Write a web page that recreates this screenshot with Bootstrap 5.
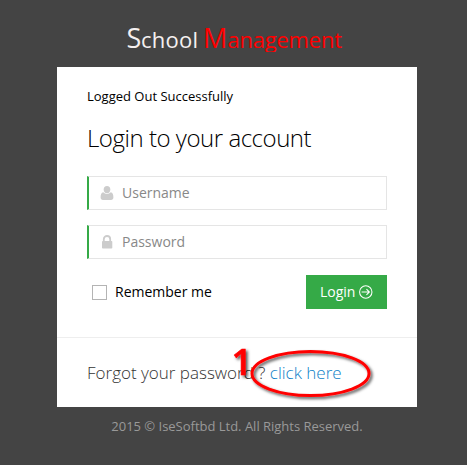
<!DOCTYPE html>
<html lang="en">
<head>
<meta charset="utf-8">
<meta name="viewport" content="width=device-width, initial-scale=1">
<title>School Management - Login</title>
<link href="https://cdn.jsdelivr.net/npm/bootstrap@5.3.0/dist/css/bootstrap.min.css" rel="stylesheet">
<style>
body{background:#444;font-family:"Open Sans",sans-serif;font-size:13px;line-height:20px;color:#000;overflow:hidden}
.login-page{padding-left:7px}
.brand-logo{height:67px;display:block;width:360px}
.login-box{width:360px;height:340px;background:#fff}
.login-main{height:270px;padding:19px 30px 0}
.login-title{font-size:24px;font-weight:300;line-height:30px;margin:17px 0 23px;white-space:nowrap;letter-spacing:-.46px}
.field{height:34px;border:1px solid #e5e5e5;border-left:2px solid #35aa47;margin-bottom:15px}
.field svg{width:14px;height:14px;margin-left:11px;flex:none}
.field input{font-size:14px;padding:0 0 2px 8px;color:#555;height:32px}
.field input::placeholder{color:#888;opacity:1}
.field input:focus{box-shadow:none}
.actions{margin-top:16px}
.remember{font-size:14px;margin-left:5px;gap:8px}
.remember .form-check-input{width:15px;height:15px;border:1px solid #b4b4b4;border-radius:0;margin:0}
.btn-login{background:#35aa47;color:#fff;font-size:14px;line-height:20px;padding:7px 14px;height:34px;width:81px;gap:4px}
.btn-login:hover{background:#1d943b;color:#fff}
.forgot{height:70px;border-top:1px solid #eee;padding:25px 30px 0;font-size:17px;font-weight:300;line-height:20px;color:#333;white-space:nowrap}
.forgot a{color:#0d7fc8}
.marker{position:absolute;left:170px;top:-1px;width:155px;height:70px;pointer-events:none;overflow:visible}
.legal{color:#999;font-size:13px;line-height:18px;padding-top:10px;letter-spacing:-.01px}
</style>
</head>
<body>
<main class="login-page d-flex flex-column align-items-center">
  <svg class="brand-logo" viewBox="57 0 360 67" role="img" aria-label="School Management" font-family="Open Sans, sans-serif">
    <defs><clipPath id="logoClip"><rect x="57" y="0" width="360" height="52"/></clipPath></defs>
    <g clip-path="url(#logoClip)">
      <text x="126.500" y="48" fill="#f5f0f0" font-size="27">S</text>
      <text x="141" y="48" fill="#f5f0f0" font-size="22" textLength="57">chool</text>
      <text x="203" y="48" fill="#f00" font-size="27">M</text>
      <text x="227.500" y="48" fill="#f00" font-size="22" textLength="114.500">anagement</text>
    </g>
  </svg>
  <section class="login-box">
    <form class="login-main">
      <div>Logged Out Successfully</div>
      <h3 class="login-title">Login to your account</h3>
      <div class="field d-flex align-items-center">
        <svg viewBox="0 0 14 14" fill="#ccc"><ellipse cx="7" cy="3.600" rx="3.300" ry="3.600"/><path d="M3.300 6.300C1.200 6.600.6 8.800.6 11.600.6 13.200 1.500 14 3 14h8c1.500 0 2.400-.8 2.400-2.400 0-2.800-.6-5-2.700-5.300C8.600 8.500 5.400 8.500 3.300 6.300z"/></svg>
        <input class="form-control border-0 rounded-0 bg-transparent" type="text" placeholder="Username" aria-label="Username">
      </div>
      <div class="field d-flex align-items-center">
        <svg viewBox="0 0 14 14" fill="#ccc"><path d="M3.800 6V4.200a3.200 3.200 0 0 1 6.400 0V6" fill="none" stroke="#ccc" stroke-width="1.800"/><rect x="2" y="6" width="10.300" height="7.500" rx=".8"/></svg>
        <input class="form-control border-0 rounded-0 bg-transparent" type="password" placeholder="Password" aria-label="Password">
      </div>
      <div class="actions d-flex justify-content-between align-items-center">
        <label class="remember d-flex align-items-center"><input class="form-check-input" type="checkbox">Remember me</label>
        <button class="btn btn-login border-0 rounded-0 d-flex align-items-center" type="button">Login
          <svg width="14" height="14" viewBox="0 0 14 14" fill="none" stroke="#fff" stroke-width="1.100"><circle cx="7" cy="7" r="6.400"/><path d="M2.700 7h8M7.700 4l3 3-3 3"/></svg>
        </button>
      </div>
    </form>
    <div class="forgot position-relative">Forgot your password ? <a href="#" class="text-decoration-none">click here</a>
      <svg class="marker" viewBox="227 337 155 70" aria-hidden="true">
        <defs><filter id="shade" x="-20%" y="-20%" width="150%" height="160%"><feDropShadow dx="2" dy="2" stdDeviation="1.800" flood-color="#000" flood-opacity=".65"/></filter></defs>
        <g filter="url(#shade)"><ellipse cx="310.500" cy="373.500" rx="58.500" ry="22" fill="none" stroke="#f00" stroke-width="3"/>
        <text x="231.500" y="374.500" fill="#f00" stroke="#f00" stroke-width=".6" font-family="Open Sans, sans-serif" font-weight="600" font-size="36">1</text></g>
      </svg>
    </div>
  </section>
  <footer class="legal text-center">2015 © IseSoftbd Ltd. All Rights Reserved.</footer>
</main>
<script src="https://cdn.jsdelivr.net/npm/bootstrap@5.3.0/dist/js/bootstrap.bundle.min.js"></script>
</body>
</html>
